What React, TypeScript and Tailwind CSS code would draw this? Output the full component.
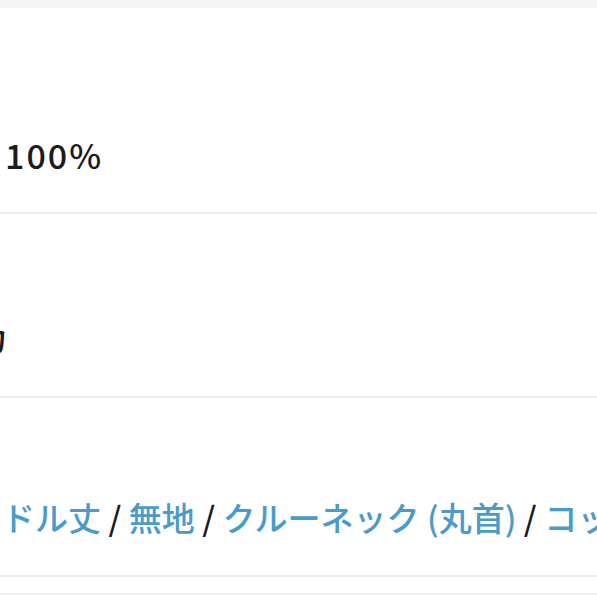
const font = {
  fontFamily: '"Noto Sans CJK JP", "Noto Sans", sans-serif',
};

export default function App() {
  return (
    <div className="min-h-screen w-full overflow-hidden bg-white" style={font}>
      <div className="h-[8px] bg-[#f5f5f5]" />

      {/* material */}
      <div className="flex h-[206px] items-end border-b-2 border-[#ececec] pb-[37px]">
        <div className="whitespace-nowrap pl-[5px] text-[34px] font-medium leading-[40px] tracking-[2px] text-[#1c1c1c]">
          100%
        </div>
      </div>

      {/* origin */}
      <div className="flex h-[184px] items-end border-b-2 border-[#ececec] pb-[38px]">
        <div className="flex w-[9px] justify-end overflow-hidden whitespace-nowrap text-[34px] font-medium leading-[40px] text-[#1c1c1c]">
          アメリカ
        </div>
      </div>

      {/* tags */}
      <div className="flex h-[179px] items-end border-b-2 border-[#ececec] pb-[38px]">
        <div className="-ml-[31px] whitespace-nowrap text-[33px] font-medium leading-[40px] text-[#1c1c1c]">
          <a className="text-[#4a9bcb]">ミドル丈</a> / <a className="text-[#4a9bcb]">無地</a> /{" "}
          <a className="text-[#4a9bcb]">クルーネック (丸首)</a> / <a className="text-[#4a9bcb]">コットン</a>
        </div>
      </div>

      <div className="h-[18px] border-b-2 border-[#f0f0f0]" />
    </div>
  );
}
